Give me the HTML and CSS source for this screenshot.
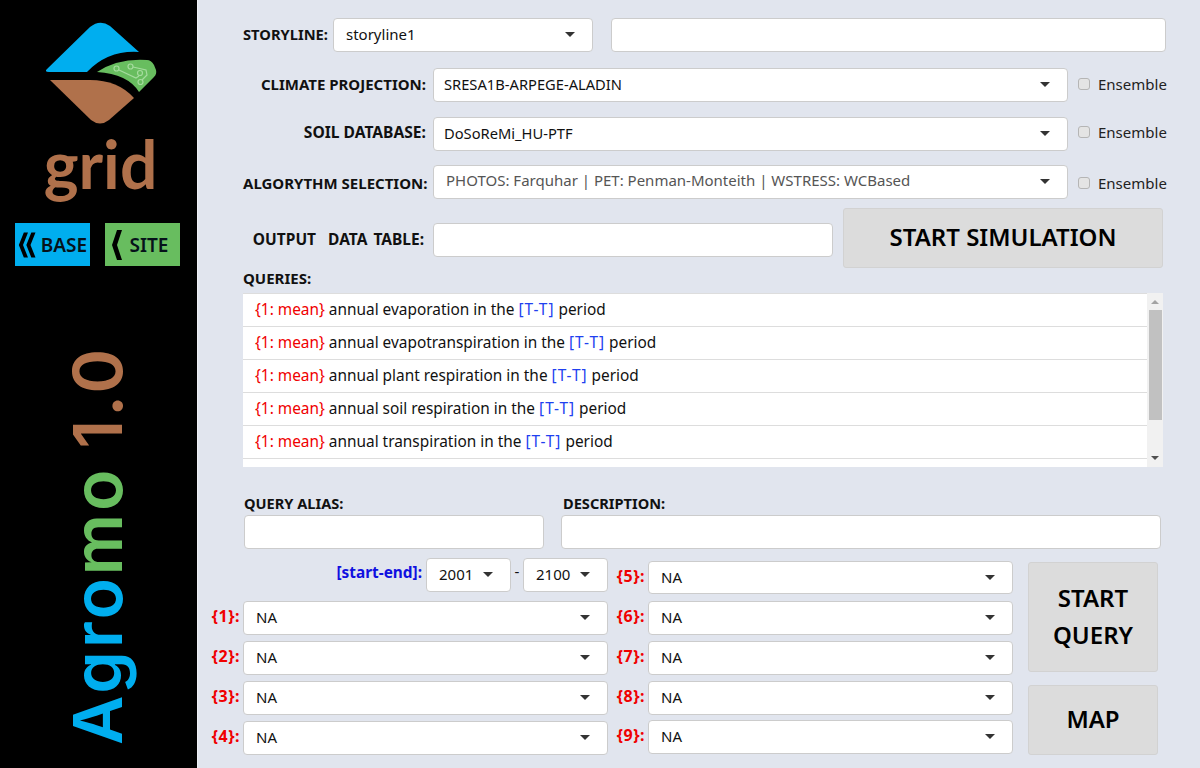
FILE: index.html
```html
<!DOCTYPE html>
<html lang="en">
<head>
    <meta charset="UTF-8">
    <title>AgroMo Grid</title>
    <link rel="stylesheet" href="styles.css">
</head>
<body>
    <aside class="sidebar">
        <svg class="logo" width="114" height="104" viewBox="44 22 114 104">
            <path fill="#00aeef" d="M47 70 L90 28 Q100 20 110 27 L139 53 Q108 51 87 73 L49 73 Q44 73 47 70 Z"/>
            <path fill="#68bd5f" d="M97 73 Q118 59 147 61 Q151 61 154 66 L156 71 Q157 75 154 78 L139 93 Q128 75 97 73 Z"/>
            <path fill="#b0714b" d="M50 81 L90 81 Q118 81 134 99 L109 121 Q100 128 91 121 Z"/>
            <g fill="none" stroke="#a5dc9e" stroke-width="1.2">
                <circle cx="116.500" cy="69.500" r="2.500"/>
                <circle cx="130.500" cy="67.500" r="2.500"/>
                <circle cx="140" cy="74" r="2.500"/>
                <circle cx="140.500" cy="83" r="2.500"/>
                <path d="M119 71 L136 79 L139 77 M133 68 L146 71 L147 76 L142 81"/>
            </g>
        </svg>
        <div class="brand-word">grid</div>
        <nav class="mode-nav">
            <a class="mode-btn mode-base">
                <svg width="20" height="32" viewBox="0 0 24 32"><path d="M7 1 H12 L6 16 L12 31 H7 L1 16 Z M16 1 H21 L15 16 L21 31 H16 L10 16 Z"/></svg>
                <span>BASE</span>
            </a>
            <a class="mode-btn mode-site">
                <svg width="12" height="32" viewBox="0 0 12 32"><path d="M6 1 H11 L6 16 L11 31 H6 L1 16 Z"/></svg>
                <span>SITE</span>
            </a>
        </nav>
        <div class="product-name"><span class="c-blue">Agro</span><span class="c-green">mo</span> <span class="c-brown">1.0</span></div>
    </aside>

    <main class="content">
        <div class="row row-storyline">
            <label class="lbl lbl-story">STORYLINE:</label>
            <div class="sel sel-story">storyline1<i class="caret"></i></div>
            <input class="txt txt-story" type="text">
        </div>
        <div class="row row-climate">
            <label class="lbl lbl-main">CLIMATE PROJECTION:</label>
            <div class="sel sel-main">SRESA1B-ARPEGE-ALADIN<i class="caret"></i></div>
            <label class="ensemble"><span class="box"></span>Ensemble</label>
        </div>
        <div class="row row-soil">
            <label class="lbl lbl-main">SOIL DATABASE:</label>
            <div class="sel sel-main">DoSoReMi_HU-PTF<i class="caret"></i></div>
            <label class="ensemble"><span class="box"></span>Ensemble</label>
        </div>
        <div class="row row-algo">
            <label class="lbl lbl-main">ALGORYTHM SELECTION:</label>
            <div class="sel sel-main sel-algo">PHOTOS: Farquhar | PET: Penman-Monteith | WSTRESS: WCBased<i class="caret"></i></div>
            <label class="ensemble"><span class="box"></span>Ensemble</label>
        </div>
        <div class="row row-output">
            <label class="lbl lbl-main">OUTPUT&nbsp; DATA TABLE:</label>
            <input class="txt txt-output" type="text">
            <button class="action action-sim">START SIMULATION</button>
        </div>

        <div class="lbl queries-title">QUERIES:</div>
        <div class="queries">
            <ul class="query-list">
                <li><span class="q-red">{1: mean}</span> annual evaporation in the <span class="q-blue">[T-T]</span> period</li>
                <li><span class="q-red">{1: mean}</span> annual evapotranspiration in the <span class="q-blue">[T-T]</span> period</li>
                <li><span class="q-red">{1: mean}</span> annual plant respiration in the <span class="q-blue">[T-T]</span> period</li>
                <li><span class="q-red">{1: mean}</span> annual soil respiration in the <span class="q-blue">[T-T]</span> period</li>
                <li><span class="q-red">{1: mean}</span> annual transpiration in the <span class="q-blue">[T-T]</span> period</li>
                <li></li>
            </ul>
            <div class="scrollbar">
                <i class="arrow-up"></i>
                <div class="thumb"></div>
                <i class="arrow-down"></i>
            </div>
        </div>

        <div class="alias-row">
            <div class="field field-alias">
                <label class="lbl">QUERY ALIAS:</label>
                <input class="txt" type="text">
            </div>
            <div class="field field-desc">
                <label class="lbl">DESCRIPTION:</label>
                <input class="txt" type="text">
            </div>
        </div>

        <div class="query-grid">
            <div class="col col-left">
                <div class="param param-years">
                    <label class="years-lbl">[start-end]:</label>
                    <div class="sel sel-year">2001<i class="caret"></i></div>
                    <span class="dash">-</span>
                    <div class="sel sel-year">2100<i class="caret"></i></div>
                </div>
                <div class="param"><label class="param-lbl">{1}:</label><div class="sel sel-param">NA<i class="caret"></i></div></div>
                <div class="param"><label class="param-lbl">{2}:</label><div class="sel sel-param">NA<i class="caret"></i></div></div>
                <div class="param"><label class="param-lbl">{3}:</label><div class="sel sel-param">NA<i class="caret"></i></div></div>
                <div class="param"><label class="param-lbl">{4}:</label><div class="sel sel-param">NA<i class="caret"></i></div></div>
            </div>
            <div class="col col-right">
                <div class="param param-first"><label class="param-lbl">{5}:</label><div class="sel sel-param">NA<i class="caret"></i></div></div>
                <div class="param"><label class="param-lbl">{6}:</label><div class="sel sel-param">NA<i class="caret"></i></div></div>
                <div class="param"><label class="param-lbl">{7}:</label><div class="sel sel-param">NA<i class="caret"></i></div></div>
                <div class="param"><label class="param-lbl">{8}:</label><div class="sel sel-param">NA<i class="caret"></i></div></div>
                <div class="param"><label class="param-lbl">{9}:</label><div class="sel sel-param">NA<i class="caret"></i></div></div>
            </div>
            <div class="col col-actions">
                <button class="action action-query">START QUERY</button>
                <button class="action action-map">MAP</button>
            </div>
        </div>
    </main>
</body>
</html>
```

FILE: styles.css
```css
* {
    box-sizing: border-box;
}

body {
    margin: 0;
    height: 768px;
    overflow: hidden;
    display: flex;
    font-family: "Noto Sans", sans-serif;
    font-size: 15px;
    color: #111;
    background-color: #e1e5ee;
}

/* barra lateral */
.sidebar {
    width: 197px;
    height: 768px;
    flex: none;
    background-color: #000;
    display: flex;
    flex-direction: column;
    align-items: center;
}

.logo {
    margin-top: 21px;
    margin-left: 5px;
    display: block;
}

.brand-word {
    font-family: Lato, sans-serif;
    font-weight: 700;
    font-size: 66px;
    line-height: 68px;
    color: #b0714b;
    margin-top: 5px;
    margin-left: 4px;
}

.mode-nav {
    display: flex;
    gap: 15px;
    margin-top: 25px;
    margin-right: 2px;
}

.mode-btn {
    width: 75px;
    height: 43px;
    display: flex;
    align-items: center;
    justify-content: center;
    gap: 3px;
    color: #06121a;
    font-weight: 600;
    font-size: 19px;
}

.mode-btn svg {
    fill: #000;
}

.mode-base {
    background-color: #00aeef;
}

.mode-site {
    background-color: #68bd5f;
    gap: 7px;
    padding-right: 6px;
}

.product-name {
    writing-mode: vertical-rl;
    transform: rotate(180deg);
    font-family: Inter, sans-serif;
    font-weight: 600;
    font-size: 68px;
    line-height: 68px;
    letter-spacing: 3px;
    word-spacing: -2px;
    white-space: nowrap;
    margin-top: 80px;
    margin-right: 4px;
}

.c-blue {
    color: #00aeef;
}

.c-green {
    color: #68bd5f;
}

.c-brown {
    color: #b0714b;
}

/* formulario */
.content {
    flex: 1;
    padding: 18px 0 0 45px;
    border-left: 1px solid #eef0f5;
}

.row {
    display: flex;
    align-items: center;
}

.row-climate {
    margin-top: 16px;
}

.row-soil {
    margin-top: 15px;
}

.row-algo {
    margin-top: 14px;
}

.row-output {
    margin-top: 9px;
    height: 60px;
    align-items: flex-start;
}

.lbl {
    font-weight: 700;
    font-size: 15px;
    line-height: 20px;
    color: #111;
    white-space: nowrap;
}

.lbl-story {
    width: 90px;
    margin-top: -3px;
    font-size: 14.700px;
}

.lbl-main {
    width: 190px;
    padding-right: 7px;
    text-align: right;
}

.row-climate .lbl-main,
.row-climate .ensemble {
    margin-top: -2px;
}

.row-soil .lbl-main,
.row-soil .ensemble {
    margin-top: -4px;
}

.row-soil .lbl-main {
    font-size: 15.600px;
}

.row-algo .lbl-main,
.row-algo .ensemble {
    margin-top: 2px;
}

.row-output .lbl-main {
    margin-top: 21px;
    padding-right: 9px;
    font-size: 15.500px;
    word-spacing: 2px;
}

.sel {
    position: relative;
    height: 34px;
    line-height: 30px;
    padding-left: 12px;
    background-color: #fff;
    border: 1px solid #ccc;
    border-radius: 4px;
    white-space: nowrap;
}

.caret {
    position: absolute;
    right: 17px;
    top: 13px;
    border-left: 5px solid transparent;
    border-right: 5px solid transparent;
    border-top: 5px solid #333;
}

.sel-story {
    width: 260px;
}

.sel-main {
    width: 635px;
    padding-left: 10px;
    font-size: 14.700px;
}

.sel-algo {
    padding-left: 12px;
    font-size: 15px;
    color: #555;
    line-height: 29px;
}

.txt {
    display: block;
    height: 34px;
    background-color: #fff;
    border: 1px solid #ccc;
    border-radius: 4px;
    outline: none;
}

.txt-story {
    width: 555px;
    margin-left: 18px;
}

.txt-output {
    width: 400px;
    margin-top: 15px;
}

.ensemble {
    display: flex;
    align-items: center;
    margin-left: 10px;
    color: #222;
}

.box {
    width: 12px;
    height: 12px;
    margin-right: 8px;
    background-color: #e4e4e4;
    border: 1px solid #b5b5b5;
    border-radius: 3px;
}

.action {
    display: block;
    font-family: inherit;
    font-weight: 600;
    font-size: 24px;
    color: #000;
    background-color: #dcdcdc;
    border: 1px solid #d2d2d2;
    border-radius: 3px;
    padding: 0;
}

.action-sim {
    width: 320px;
    height: 60px;
    margin-left: 10px;
    padding-bottom: 4px;
}

/* lista de consultas */
.queries-title {
    height: 25px;
}

.queries {
    display: flex;
    width: 920px;
    height: 174px;
    overflow: hidden;
}

.query-list {
    flex: 1;
    margin: 0;
    padding: 0;
    list-style: none;
    background-color: #fff;
    border-top: 1px solid #ddd;
}

.query-list li {
    height: 33px;
    line-height: 32px;
    padding-left: 12px;
    font-size: 15.400px;
    border-bottom: 1px solid #ddd;
}

.q-red {
    color: #f00000;
}

.q-blue {
    color: #2040f0;
    letter-spacing: 1px;
}

.scrollbar {
    width: 16px;
    flex: none;
    background-color: #f1f1f1;
    display: flex;
    flex-direction: column;
    align-items: center;
}

.thumb {
    width: 13px;
    height: 110px;
    background-color: #c1c1c1;
    margin-top: 6px;
}

.arrow-up {
    margin-top: 7px;
    border-left: 4px solid transparent;
    border-right: 4px solid transparent;
    border-bottom: 4px solid #a3a3a3;
}

.arrow-down {
    margin-top: auto;
    margin-bottom: 7px;
    border-left: 4px solid transparent;
    border-right: 4px solid transparent;
    border-top: 4px solid #505050;
}

.alias-row {
    display: flex;
    margin-top: 26px;
}

.field .lbl {
    display: block;
    margin-bottom: 2px;
    font-size: 14.600px;
}

.field .txt {
    width: 100%;
}

.field-alias {
    width: 300px;
    margin-left: 1px;
}

.field-desc {
    width: 600px;
    margin-left: 17px;
}

.field-desc .lbl {
    padding-left: 2px;
}

/* parametros */
.query-grid {
    display: flex;
    margin-top: 9px;
}

.col {
    display: flex;
    flex-direction: column;
    gap: 6px;
}

.col-left {
    width: 365px;
}

.col-right {
    width: 365px;
    margin-left: 40px;
    padding-top: 3px;
}

.col-right .param:last-child {
    margin-top: -1px;
}

.col-left .param:nth-child(2) {
    margin-top: 3px;
}

.param-first .sel {
    height: 33px;
}

.param {
    position: relative;
    display: flex;
    height: 34px;
}

.param-lbl {
    position: absolute;
    right: 100%;
    top: 4px;
    width: 40px;
    padding-right: 3px;
    text-align: right;
    font-size: 16px;
    font-weight: 700;
    letter-spacing: 0.500px;
    color: #f00000;
}

.sel-param {
    width: 365px;
}

.param-years {
    justify-content: flex-end;
}

.years-lbl {
    font-weight: 700;
    font-size: 15.400px;
    color: #1010e0;
    margin-right: 4px;
    margin-top: 4px;
}

.sel-year {
    width: 85px;
}

.dash {
    width: 12px;
    text-align: center;
    line-height: 26px;
}

.col-actions {
    width: 130px;
    margin-left: 15px;
    padding-top: 4px;
    gap: 13px;
}

.action-query {
    height: 110px;
    line-height: 37px;
    padding: 0 20px 2px;
}

.action-map {
    height: 70px;
    padding-bottom: 4px;
}
```
